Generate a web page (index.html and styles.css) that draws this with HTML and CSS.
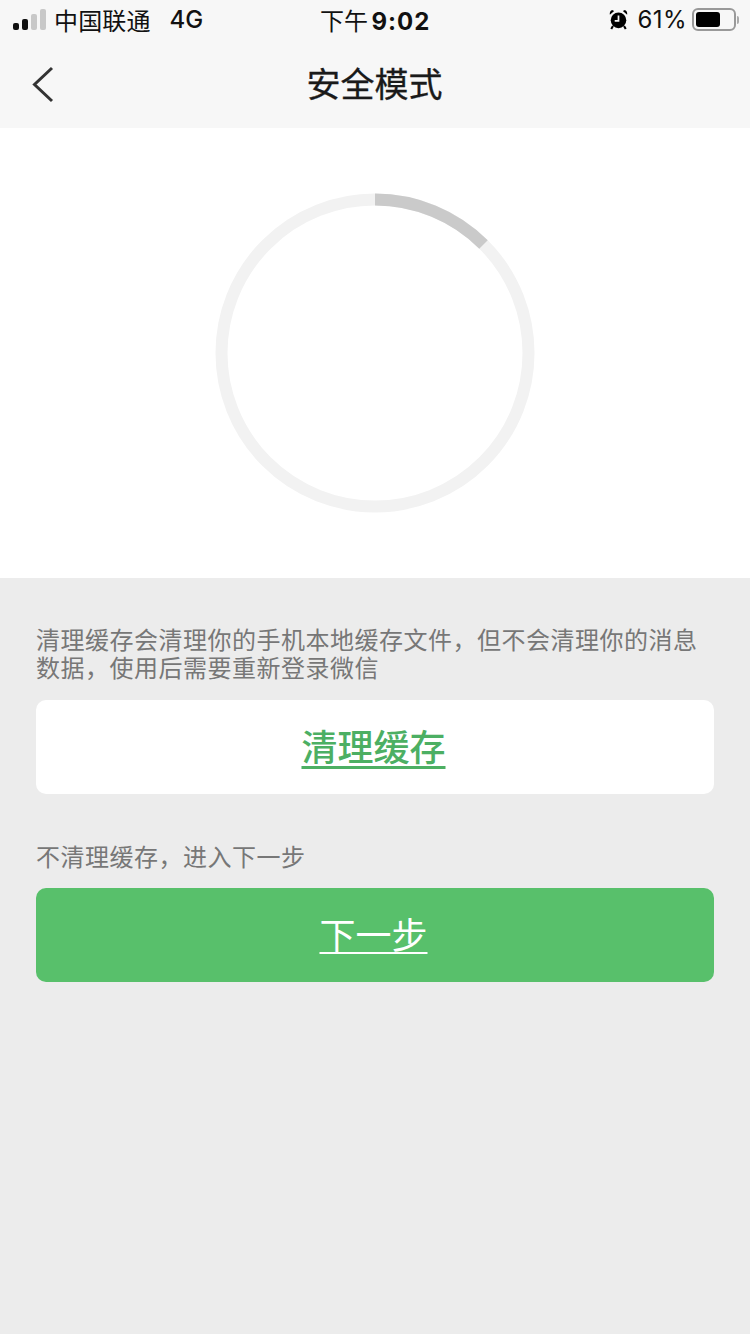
FILE: index.html
```html
<!DOCTYPE html>
<html lang="zh-CN">
<head>
<meta charset="utf-8">
<title>安全模式</title>
<link rel="stylesheet" href="styles.css">
</head>
<body>
<div class="page">
  <header class="top">
    <div class="status">
      <div class="status-left">
        <span class="signal"><i class="b1"></i><i class="b2"></i><i class="b3"></i><i class="b4"></i></span>
        <span class="carrier">中国联通</span>
        <span class="net">4G</span>
      </div>
      <div class="clock">下午 <b>9:02</b></div>
      <div class="status-right">
        <svg class="alarm" width="19" height="23" viewBox="0 0 22 24">
          <circle cx="11" cy="13" r="9" fill="#000"/>
          <path d="M11 7.5V13.6H6.6" fill="none" stroke="#f7f7f7" stroke-width="2"/>
          <path d="M1 6.6 6 2.2 3.6 1C1.6 1.6.4 3.8 1 6.6ZM21 6.6 16 2.2 18.4 1C20.4 1.6 21.6 3.8 21 6.6Z" fill="#000"/>
          <path d="M4.6 19.6 2.6 23M17.4 19.6 19.4 23" stroke="#000" stroke-width="2.4"/>
        </svg>
        <span class="pct">61%</span>
        <span class="battery"><span class="level"></span></span>
        <span class="nub"></span>
      </div>
    </div>
    <nav class="nav">
      <svg class="back" width="24" height="38" viewBox="0 0 24 38"><path d="M21 2 3.5 18.5 21 35" fill="none" stroke="#333" stroke-width="3"/></svg>
      <h1>安全模式</h1>
    </nav>
  </header>
  <section class="hero">
    <svg width="320" height="320" viewBox="0 0 320 320">
      <circle cx="160" cy="160" r="153.5" fill="none" stroke="#f2f2f2" stroke-width="12"/>
      <path d="M160 6.5A153.5 153.5 0 0 1 268.5 51.5" fill="none" stroke="#cacaca" stroke-width="12"/>
    </svg>
  </section>
  <main class="body">
    <p class="note first">清理缓存会清理你的手机本地缓存文件，但不会清理你的消息数据，使用后需要重新登录微信</p>
    <a class="btn btn-white">清理缓存</a>
    <p class="note second">不清理缓存，进入下一步</p>
    <a class="btn btn-green">下一步</a>
  </main>
</div>
</body>
</html>
```
FILE: styles.css
```css
* { box-sizing: border-box; }
html, body { margin: 0; padding: 0; }
body { font-family: "Noto Sans CJK SC", "Noto Sans", sans-serif; background: #ececec; }
.page { width: 750px; height: 1334px; overflow: hidden; display: flex; flex-direction: column; }
.top { height: 128px; background: #f7f7f7; display: flex; flex-direction: column; }
.status { height: 40px; position: relative; display: flex; justify-content: space-between; align-items: center; color: #111; font-size: 24px; line-height: 40px; }
.status-left { display: flex; align-items: center; padding-left: 13px; }
.signal { display: flex; align-items: flex-end; gap: 3px; height: 22px; margin-right: 8px; margin-top: -2px; }
.signal i { width: 6px; border-radius: 2px; background: #c8c8c8; }
.signal .b1 { height: 7px; background: #111; }
.signal .b2 { height: 11px; background: #111; }
.signal .b3 { height: 16px; }
.signal .b4 { height: 21px; }
.carrier { font-size: 24px; letter-spacing: 0.15px; }
.net { font-family: Inter, "Liberation Sans", sans-serif; font-weight: 500; font-size: 24px; margin-left: 19px; }
.clock { position: absolute; left: 320px; top: 0; font-size: 24px; white-space: nowrap; }
.clock b { font-family: Inter, "Liberation Sans", sans-serif; font-weight: 700; font-size: 24px; letter-spacing: 1px; margin-left: -2px; }
.status-right { display: flex; align-items: center; padding-right: 11px; }
.alarm { display: block; margin-right: 10px; margin-top: -2px; }
.pct { font-family: Inter, "Liberation Sans", sans-serif; font-size: 24px; letter-spacing: 0.4px; margin-right: 5px; }
.battery { width: 44px; height: 23px; border: 2px solid #999; border-radius: 6px; padding: 2px; display: block; margin-top: -1px; }
.level { display: block; width: 24px; height: 15px; background: #000; border-radius: 3px; }
.nub { width: 2px; height: 8px; background: #aaa; border-radius: 0 2px 2px 0; margin-left: 1px; }
.nav { flex: 1; position: relative; display: flex; align-items: center; justify-content: center; }
.back { position: absolute; left: 31px; top: 26px; }
.nav h1 { margin: 0 1px 2px 0; font-size: 34px; font-weight: 400; color: #1a1a1a; line-height: 86px; -webkit-text-stroke: 0.3px #1a1a1a; }
.hero { height: 450px; background: #fff; display: flex; justify-content: center; align-items: center; }
.hero svg { display: block; }
.body { flex: 1; background: #ececec; padding: 0 36px; }
.note { margin: 0; color: #777; font-size: 24px; line-height: 28px; letter-spacing: 0.5px; }
.note.first { padding-top: 47px; margin-bottom: 19px; }
.note.second { margin-top: 48px; margin-bottom: 18px; }
.btn { display: block; height: 94px; line-height: 90px; border-radius: 10px; text-align: center; font-size: 36px; text-decoration: underline; padding-right: 3px; }
.btn-white { background: #fff; color: #4caf63; font-weight: 500; text-underline-offset: 5px; text-decoration-thickness: 3px; }
.btn-green { background: #58c06b; color: #fff; text-underline-offset: 3px; text-decoration-thickness: 2px; }
```
